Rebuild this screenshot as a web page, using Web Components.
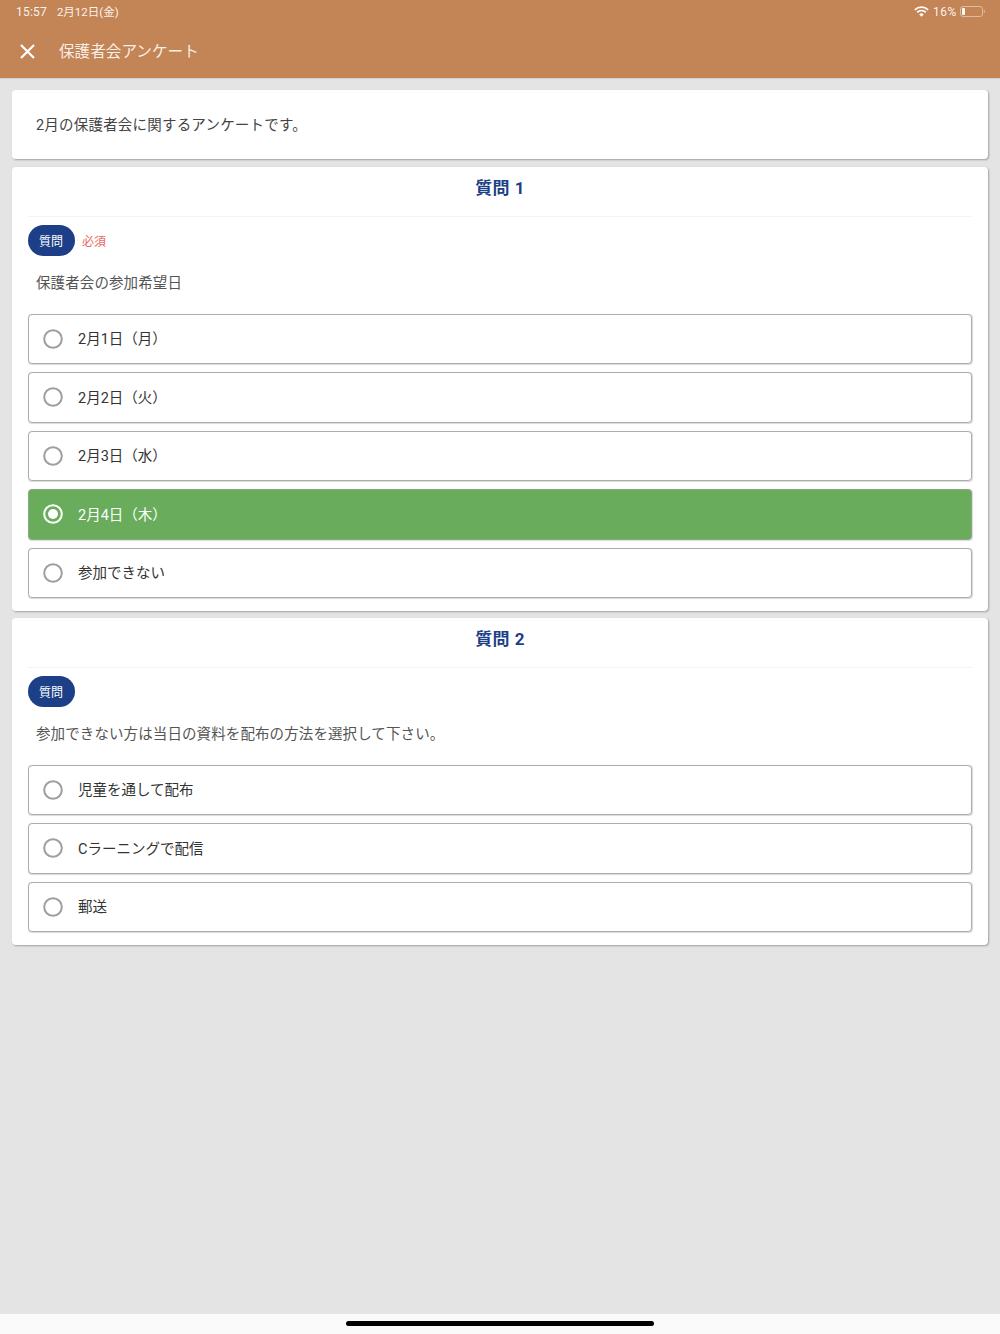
<!DOCTYPE html>
<html lang="ja">
<head>
<meta charset="utf-8">
<title>保護者会アンケート</title>
<style>
  html, body { margin: 0; padding: 0; height: 100%; }
  body {
    font-family: Roboto, "Noto Sans CJK JP", sans-serif;
    background: #e4e4e4;
  }
</style>
</head>
<body>
<survey-app></survey-app>

<script>
class SurveyApp extends HTMLElement {
  constructor() {
    super();
    this.attachShadow({ mode: 'open' });
  }

  connectedCallback() {
    this.shadowRoot.innerHTML = `
      <style>
        :host {
          display: flex;
          flex-direction: column;
          height: 1334px;
          overflow: hidden;
        }
        main {
          flex: 1;
          display: flex;
          flex-direction: column;
          gap: 6.5px;
          padding: 12px 12px 0;
        }
        intro-card { margin-bottom: 1px; }
      </style>
      <app-header title="保護者会アンケート"></app-header>
      <main>
        <intro-card>2月の保護者会に関するアンケートです。</intro-card>
        <question-card title="質問 1" text="保護者会の参加希望日" required>
          <option-row>2月1日（月）</option-row>
          <option-row>2月2日（火）</option-row>
          <option-row>2月3日（水）</option-row>
          <option-row selected>2月4日（木）</option-row>
          <option-row>参加できない</option-row>
        </question-card>
        <question-card title="質問 2" text="参加できない方は当日の資料を配布の方法を選択して下さい。">
          <option-row>児童を通して配布</option-row>
          <option-row>Cラーニングで配信</option-row>
          <option-row>郵送</option-row>
        </question-card>
      </main>
      <home-bar></home-bar>
    `;
  }
}

class AppHeader extends HTMLElement {
  constructor() {
    super();
    this.attachShadow({ mode: 'open' });
  }

  connectedCallback() {
    this.shadowRoot.innerHTML = `
      <style>
        :host {
          display: block;
          height: 78px;
          background: #c48556;
          color: #fff;
          box-shadow: 0 1px 1px rgba(0,0,0,.08);
        }
        .status {
          height: 24px;
          display: flex;
          align-items: center;
          padding: 0 15px 1px 16px;
          box-sizing: border-box;
          font-size: 12px;
          color: rgba(255,255,255,.92);
        }
        .time { letter-spacing: .2px; }
        .date { margin-left: 10px; font-size: 11.5px; padding-bottom: 1px; }
        .right { margin-left: auto; display: flex; align-items: center; gap: 3px; }
        .batt { letter-spacing: .6px; margin-left: 1px; }
        .bar {
          height: 54px;
          display: flex;
          align-items: center;
          box-sizing: border-box;
        }
        .close { width: 15px; height: 15px; margin-left: 20px; display: block; }
        h1 {
          margin: 0 0 2px 24px;
          font-size: 15.6px;
          font-weight: 400;
          color: rgba(255,255,255,.88);
        }
      </style>
      <div class="status">
        <span class="time">15:57</span><span class="date">2月12日(金)</span>
        <div class="right">
          <svg width="15" height="11" viewBox="0 0 14 10" fill="none" stroke="#fff" stroke-linecap="butt">
            <path d="M.8 3.4a9 9 0 0 1 12.4 0" stroke-width="1.6"/>
            <path d="M3 5.7a6 6 0 0 1 8 0" stroke-width="1.6"/>
            <path d="M7 9.8 4.9 7.7a3 3 0 0 1 4.2 0z" fill="#fff" stroke="none"/>
          </svg>
          <span class="batt">16%</span>
          <svg width="25" height="11" viewBox="0 0 25 11">
            <rect x=".5" y=".5" width="22" height="10" rx="2.6" fill="none" stroke="rgba(255,255,255,.45)"/>
            <rect x="2" y="2" width="3" height="7" rx="1" fill="#fff"/>
            <path d="M23.8 3.8c.7.2 1.1.9 1.1 1.7s-.4 1.5-1.1 1.7z" fill="rgba(255,255,255,.5)"/>
          </svg>
        </div>
      </div>
      <div class="bar">
        <svg class="close" viewBox="0 0 15 15" stroke="#fff" stroke-width="2.2" fill="none">
          <path d="M1 1l13 13M14 1L1 14"/>
        </svg>
        <h1>${this.getAttribute('title')}</h1>
      </div>
    `;
    this.removeAttribute('title');
  }
}

class IntroCard extends HTMLElement {
  constructor() {
    super();
    this.attachShadow({ mode: 'open' });
  }

  connectedCallback() {
    this.shadowRoot.innerHTML = `
      <style>
        :host {
          display: flex;
          align-items: center;
          height: 69px;
          box-sizing: border-box;
          padding: 0 24px 3px;
          background: #fff;
          border-radius: 4px;
          box-shadow: 1px 1px 2px rgba(0,0,0,.3);
          font-size: 14.5px;
          color: #444;
          letter-spacing: .2px;
        }
      </style>
      <slot></slot>
    `;
  }
}

class QuestionCard extends HTMLElement {
  constructor() {
    super();
    this.attachShadow({ mode: 'open' });
  }

  connectedCallback() {
    const required = this.hasAttribute('required');
    this.shadowRoot.innerHTML = `
      <style>
        :host {
          display: block;
          padding: 0 16px 13px;
          background: #fff;
          border-radius: 4px;
          box-shadow: 1px 1px 2px rgba(0,0,0,.3);
        }
        h2 {
          margin: 0;
          height: 50px;
          box-sizing: border-box;
          padding-bottom: 9px;
          display: flex;
          align-items: center;
          justify-content: center;
          font-size: 17px;
          font-weight: 700;
          color: #1c3f87;
          letter-spacing: .4px;
          border-bottom: 1px solid #f3f3f3;
        }
        .tags {
          display: flex;
          align-items: center;
          gap: 7px;
          margin-top: 8px;
          height: 31px;
        }
        .pill {
          width: 47px;
          height: 31px;
          padding: 0 1px 0 0;
          box-sizing: border-box;
          border-radius: 16px;
          background: #1c3f87;
          color: #fff;
          font-size: 12px;
          display: flex;
          align-items: center;
          justify-content: center;
        }
        .req { font-size: 12px; color: #e96a60; }
        p {
          margin: 0;
          height: 58px;
          box-sizing: border-box;
          padding: 0 8px 7px;
          display: flex;
          align-items: center;
          font-size: 14.5px;
          color: #555;
          letter-spacing: .1px;
        }
        .options { display: flex; flex-direction: column; gap: 8px; }
        ::slotted(option-row) { display: flex; }
      </style>
      <h2>${this.getAttribute('title')}</h2>
      <div class="tags">
        <span class="pill">質問</span>
        ${required ? '<span class="req">必須</span>' : ''}
      </div>
      <p>${this.getAttribute('text')}</p>
      <div class="options"><slot></slot></div>
    `;
    this.removeAttribute('title');
  }
}

class OptionRow extends HTMLElement {
  constructor() {
    super();
    this.attachShadow({ mode: 'open' });
  }

  connectedCallback() {
    const on = this.hasAttribute('selected');
    this.shadowRoot.innerHTML = `
      <style>
        :host {
          display: flex;
          align-items: center;
          height: 50.5px;
          box-sizing: border-box;
          padding-left: 14px;
          border: 1px solid #adadad;
          border-radius: 4px;
          background: #fff;
          box-shadow: .5px .5px 1px rgba(0,0,0,.15);
          font-size: 14.5px;
          color: #333;
        }
        :host([selected]) {
          background: #69ac5c;
          border-color: #8fa58a;
          color: #fff;
        }
        svg { width: 20px; height: 20px; margin-right: 15px; flex: none; }
        .label { padding-bottom: 2px; }
      </style>
      <svg viewBox="0 0 20 20">
        <circle cx="10" cy="10" r="8.8" fill="none" stroke="${on ? '#fff' : '#9e9e9e'}" stroke-width="2"/>
        ${on ? '<circle cx="10" cy="10" r="5" fill="#fff"/>' : ''}
      </svg>
      <span class="label"><slot></slot></span>
    `;
  }
}

class HomeBar extends HTMLElement {
  constructor() {
    super();
    this.attachShadow({ mode: 'open' });
  }

  connectedCallback() {
    this.shadowRoot.innerHTML = `
      <style>
        :host {
          display: flex;
          justify-content: center;
          height: 20px;
          padding-top: 7px;
          box-sizing: border-box;
          background: #fafafa;
        }
        div { width: 308px; height: 5px; border-radius: 3px; background: #000; }
      </style>
      <div></div>
    `;
  }
}

customElements.define('survey-app', SurveyApp);
customElements.define('app-header', AppHeader);
customElements.define('intro-card', IntroCard);
customElements.define('question-card', QuestionCard);
customElements.define('option-row', OptionRow);
customElements.define('home-bar', HomeBar);
</script>
</body>
</html>
